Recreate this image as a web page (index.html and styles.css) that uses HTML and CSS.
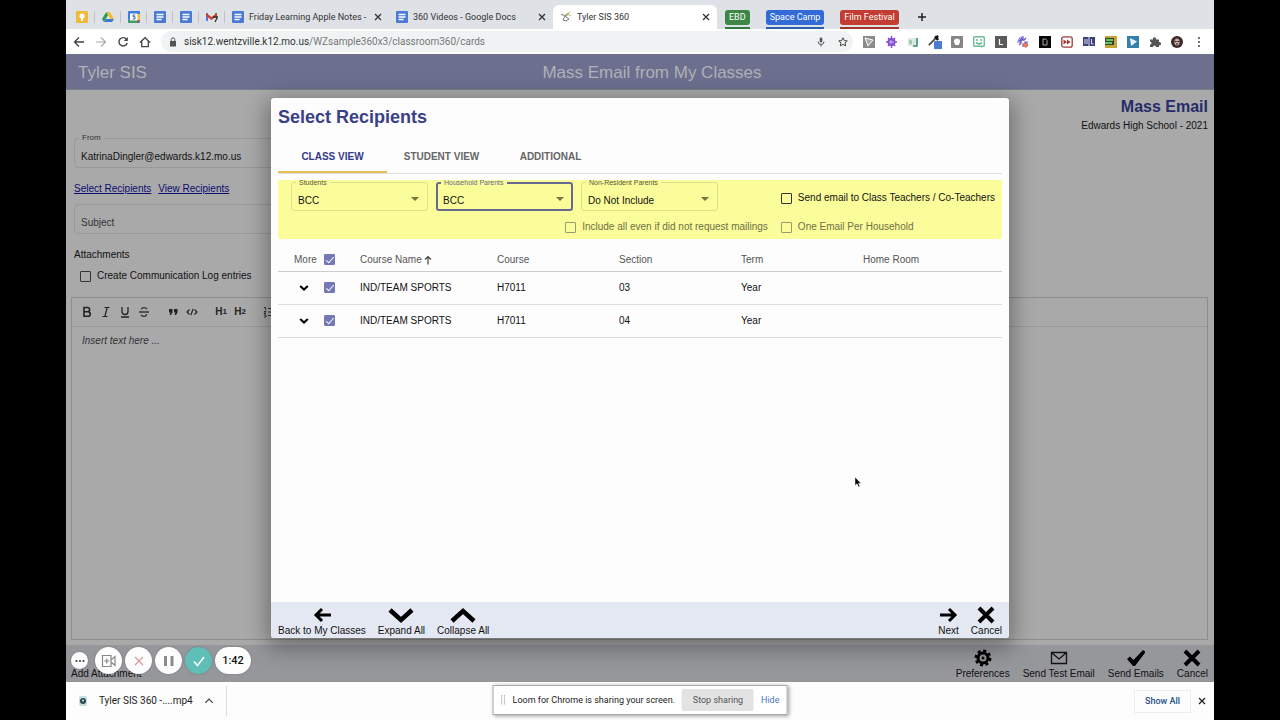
FILE: index.html
```html
<!DOCTYPE html>
<html lang="en">
<head>
<meta charset="utf-8">
<title>Tyler SIS 360</title>
<link rel="stylesheet" href="styles.css">
</head>
<body>
<svg class="defs" aria-hidden="true">
  <symbol id="doc" viewBox="0 0 12 12"><rect width="12" height="12" rx="1" fill="#4a7ad6"/><path d="M2.5 3.5h7M2.5 6h7M2.5 8.5h5" stroke="#fff" stroke-width="1.3"/></symbol>
  <symbol id="close" viewBox="0 0 8 8"><path d="M1 1l6 6M7 1L1 7" stroke="currentColor" stroke-width="1.3"/></symbol>
  <symbol id="cross" viewBox="0 0 18 18"><path d="M2 2l14 14M16 2L2 16" stroke="#000" stroke-width="4"/></symbol>
  <symbol id="chev" viewBox="0 0 10 6"><path d="M1.2 1L5 4.6 8.8 1" fill="none" stroke="#000" stroke-width="2"/></symbol>
</svg>
<div class="screen">
  <nav class="tabs" aria-label="Browser tabs">
    <span class="pin"><svg viewBox="0 0 12 12"><rect width="12" height="12" rx="1" fill="#efb93a"/><circle cx="6" cy="5" r="2.6" fill="#fff"/><path d="M5 7h2v3H5z" fill="#fff"/></svg></span>
    <span class="pin"><svg viewBox="0 0 12 12"><path d="M4.2 1h3.6L12 8H8.300z" fill="#f2bd2c"/><path d="M4.200 1L6 4.200 2 11 0 8z" fill="#2d9c57"/><path d="M3.800 8H12l-2 3H2z" fill="#3f76d8"/></svg></span>
    <span class="pin"><svg viewBox="0 0 12 12"><rect width="12" height="12" rx="1" fill="#3e7de0"/><path d="M9 9h3l-3 3z" fill="#d94b3d"/><path d="M0 9h9v3H1z" fill="#39a257"/><path d="M9 3h3v6H9z" fill="#efbd36"/><path d="M2 2.500h7.500v7H2z" fill="#fff"/><path d="M7.200 4H5v1.700h2V8H4.500" fill="none" stroke="#3465ac"/></svg></span>
    <span class="pin"><svg><use href="#doc"/></svg></span>
    <span class="pin"><svg><use href="#doc"/></svg></span>
    <span class="pin"><svg viewBox="0 0 12 12"><path d="M0 2h2v8H0z" fill="#4a7fd8"/><path d="M9 2h2v4H9z" fill="#37a457"/><path d="M0 2l5.500 4L11 2v3L5.500 9 0 5z" fill="#cf3c32"/><path d="M7 6h4.500L9 11" fill="none" stroke="#333" stroke-width="1.300"/></svg></span>
    <span class="tab"><svg class="fav"><use href="#doc"/></svg><span class="name">Friday Learning Apple Notes -</span><button aria-label="Close tab"><svg><use href="#close"/></svg></button></span>
    <span class="tab"><svg class="fav"><use href="#doc"/></svg><span class="name">360 Videos - Google Docs</span><button aria-label="Close tab"><svg><use href="#close"/></svg></button></span>
    <span class="tab active"><svg class="fav" viewBox="0 0 12 12"><path d="M1 3l4 2M5 5l4-2M5 5l-2 4M5 5l4 3" stroke="#777" stroke-width="1"/><path d="M5 4l5-3M9 5l2-1" stroke="#c6b64a" stroke-width="1"/><path d="M3 9l3 1 3-2" fill="none" stroke="#777"/></svg><span class="name">Tyler SIS 360</span><button aria-label="Close tab"><svg><use href="#close"/></svg></button></span>
    <span class="group green"><span>EBD</span></span>
    <span class="group blue"><span>Space Camp</span></span>
    <span class="group red"><span>Film Festival</span></span>
    <button class="plus" aria-label="New tab"><svg viewBox="0 0 10 10"><path d="M5 1v8M1 5h8" stroke="#222" stroke-width="1.500"/></svg></button>
  </nav>

  <div class="toolbar">
    <button aria-label="Back"><svg viewBox="0 0 12 12"><path d="M11 6H2M6 1.500L1.500 6 6 10.500" fill="none" stroke="#444" stroke-width="1.300"/></svg></button>
    <button aria-label="Forward"><svg viewBox="0 0 12 12"><path d="M1 6h9M6 1.500L10.500 6 6 10.500" fill="none" stroke="#aaa" stroke-width="1.200"/></svg></button>
    <button aria-label="Reload"><svg viewBox="0 0 12 12"><path d="M9.500 3.200A4.200 4.200 0 1 0 10.200 7" fill="none" stroke="#444" stroke-width="1.400"/><path d="M10.800 1v4H6.800z" fill="#444"/></svg></button>
    <button aria-label="Home"><svg viewBox="0 0 12 12"><path d="M1 6.500L6 1.700l5 4.800M2.700 5.500v5.200h6.600V5.500" fill="none" stroke="#444" stroke-width="1.300"/></svg></button>
    <div class="omni">
      <svg viewBox="0 0 10 10"><path d="M2 4h6v5.500H2z" fill="#555"/><path d="M3.300 4V2.500a1.700 1.700 0 0 1 3.400 0V4" fill="none" stroke="#555"/></svg>
      <span class="url">sisk12.wentzville.k12.mo.us<span>/WZsample360x3/classroom360/cards</span></span>
      <svg viewBox="0 0 10 10"><rect x="3.700" y=".5" width="2.600" height="5" rx="1.300" fill="#555"/><path d="M2 4.500a3 3 0 0 0 6 0M5 7.500v2" fill="none" stroke="#555"/></svg>
      <svg viewBox="0 0 10 10"><path d="M5 .8l1.300 2.800 3 .3L7 5.900l.7 3L5 7.400 2.300 8.900l.7-3L.7 3.900l3-.3z" fill="none" stroke="#444"/></svg>
    </div>
    <div class="exts">
      <svg viewBox="0 0 12 12"><rect width="12" height="12" fill="#8b8b8b"/><path d="M2 2l8 2-5 6z" fill="#aaa" stroke="#fff"/></svg>
      <svg viewBox="0 0 12 12"><circle cx="6.500" cy="6" r="4" fill="#8450cf"/><path d="M6.500 0v12M1 6h11M3 2l7 8M10 2l-7 8" stroke="#8450cf" stroke-width="1.500"/><path d="M4 6h5M6 4v4" stroke="#cdb4f0"/></svg>
      <svg viewBox="0 0 12 12"><path d="M1 2h10v8H1z" fill="#dce7e2"/><path d="M10 2v8H6" fill="none" stroke="#35916c" stroke-width="1.500"/><path d="M2 4h3v4H2z" fill="#9fc8b7"/></svg>
      <svg class="pipette" viewBox="0 0 14 14"><path d="M1 10l7-7" stroke="#444" stroke-width="1.600"/><path d="M7 1.500L10 5M8 3l2-2" stroke="#111" stroke-width="2.400"/><rect x="6" y="6" width="8" height="8" rx="1" fill="#4a7cd6"/></svg>
      <svg viewBox="0 0 12 12"><rect width="12" height="12" rx="1" fill="#858585"/><circle cx="6" cy="5.500" r="3" fill="#fff"/><path d="M4 8h4v1H4z" fill="#fff"/></svg>
      <svg viewBox="0 0 12 12"><rect x=".7" y=".7" width="10.600" height="9.600" rx="1" fill="#fff" stroke="#6cbd98" stroke-width="1.400"/><path d="M3 6.500q3 3 6 0M4 3v2M8 3v2" fill="none" stroke="#58ae85" stroke-width="1.300"/><path d="M7 10h3l-1 2z" fill="#6cbd98"/></svg>
      <svg viewBox="0 0 12 12"><rect width="12" height="12" fill="#5b5b5b"/><path d="M4.500 3v5.500H8" fill="none" stroke="#fff" stroke-width="1.200"/></svg>
      <svg viewBox="0 0 12 12"><path d="M6 0v11M0 6h11M2 2l8 8M9 2L2 9M4 .7l4 10M1 4l10 4" stroke="#6258c8" stroke-width="1.200"/><circle cx="6" cy="6" r="1.500" fill="#fff"/><path d="M6 7h5v3l-2 2-3-2z" fill="#e27562"/></svg>
      <svg viewBox="0 0 12 12"><rect width="12" height="12" fill="#080808"/><path d="M4 3h2.500L8 4.500V9H4z" fill="none" stroke="#aaa"/></svg>
      <svg viewBox="0 0 12 12"><rect x=".8" y=".8" width="10.400" height="10.400" rx="2" fill="#fff" stroke="#9d3a3a" stroke-width="1.300"/><path d="M2.500 3.500L6 6 2.500 8.500zM6 3.500L9.500 6 6 8.500z" fill="#b03030"/></svg>
      <svg viewBox="0 0 12 12"><path d="M0 1h12v9H0z" fill="#3d4079"/><path d="M2 3v5M4 3v5M6 1v9M8.500 3v5h2" stroke="#dadaf0" fill="none"/></svg>
      <svg viewBox="0 0 12 12"><path d="M0 0h12v12H0z" fill="#c6a338"/><path d="M0 2h9v7H0z" fill="#2e4630"/><path d="M1 4h7M0 7h7" stroke="#8be57b" stroke-width="1.500"/></svg>
      <svg viewBox="0 0 12 12"><path d="M0 0h12v12H0z" fill="#347fae"/><path d="M3 2l7 3.500L4 10z" fill="#eaf6ff"/></svg>
      <svg viewBox="0 0 12 12"><path d="M1 3.500h3a1.600 1.600 0 1 1 3 0h3v2.700a1.600 1.600 0 1 1 0 3V11H7a1.500 1.500 0 0 0-3 0H1V8.500a1.500 1.500 0 0 0 0-3z" fill="#555"/></svg>
      <svg viewBox="0 0 12 12"><circle cx="6" cy="6" r="6" fill="#3a2a2a"/><ellipse cx="6" cy="6" rx="2.700" ry="3.500" fill="#c4a79b"/><path d="M3.500 5.500h2M6.500 5.500h2M5 8h2" stroke="#3a2424"/></svg>
      <svg viewBox="0 0 12 12"><g fill="#444"><circle cx="6" cy="2" r="1"/><circle cx="6" cy="6" r="1"/><circle cx="6" cy="10" r="1"/></g></svg>
    </div>
  </div>

  <main class="page">
    <header class="apphead"><span>Tyler SIS</span><h1>Mass Email from My Classes</h1><span></span></header>
    <section class="compose">
      <div class="heading"><h2>Mass Email</h2><p>Edwards High School - 2021</p></div>
      <div class="form">
        <div class="box from"><label for="from">From</label><input id="from" type="text" value="KatrinaDingler@edwards.k12.mo.us"></div>
        <div class="links"><a href="#select">Select Recipients</a><a href="#view">View Recipients</a></div>
        <div class="box"><input type="text" aria-label="Subject" placeholder="Subject"></div>
        <p class="attach">Attachments</p>
        <label class="check log"><input type="checkbox">Create Communication Log entries</label>
      </div>
      <div class="editor">
        <div class="format">
          <button aria-label="Bold"><svg viewBox="0 0 12 12"><path d="M3 1.500h3.500a2 2 0 0 1 0 4.200H3zM3 5.700h4a2.200 2.200 0 0 1 0 4.600H3z" fill="none" stroke="#222" stroke-width="1.600"/></svg></button>
          <button aria-label="Italic"><svg viewBox="0 0 12 12"><path d="M4.500 1.500h5M2.500 10.500h5M7.200 1.500l-2.400 9" stroke="#222" stroke-width="1.200"/></svg></button>
          <button aria-label="Underline"><svg viewBox="0 0 12 12"><path d="M3 1v4.500a3 3 0 0 0 6 0V1M2 11h8" fill="none" stroke="#222" stroke-width="1.300"/></svg></button>
          <button aria-label="Strike"><svg viewBox="0 0 12 12"><path d="M9 3.200C8 1 3.500 1 3.500 3.500M8.500 8C8.500 11 4 10.800 3 8.800M1 6h10" fill="none" stroke="#333" stroke-width="1.300"/></svg></button>
          <button class="gap" aria-label="Quote"><svg viewBox="0 0 12 12"><path d="M2 3h3.500v3.500L4 9H2.500l1-2.500H2zM7 3h3.500v3.500L9 9H7.500l1-2.500H7z" fill="#222"/></svg></button>
          <button aria-label="Code"><svg viewBox="0 0 12 12"><path d="M3.500 3.500L1 6l2.500 2.500M8.500 3.500L11 6 8.500 8.500M7 3L5 9" fill="none" stroke="#222" stroke-width="1.200"/></svg></button>
          <button class="gap">H<sub>1</sub></button>
          <button>H<sub>2</sub></button>
          <button class="gap list" aria-label="List"><svg viewBox="0 0 12 12"><path d="M5 2.500h6M5 6h6M5 9.500h6M1 1.500h1.500V4M1 5.500h2L1 7.500h2M1 9h2v2H1" fill="none" stroke="#333"/></svg></button>
        </div>
        <p class="hint">Insert text here ...</p>
      </div>
    </section>
    <footer class="actions">
      <button class="act"><svg></svg>Add Attachment</button>
      <span class="spring"></span>
      <button class="act"><svg viewBox="0 0 18 18"><circle cx="9" cy="9" r="5" fill="none" stroke="#000" stroke-width="3"/><circle cx="9" cy="9" r="7.200" fill="none" stroke="#000" stroke-width="2.500" stroke-dasharray="3 2.650"/><circle cx="9" cy="9" r="1.500"/></svg>Preferences</button>
      <button class="act"><svg viewBox="0 0 18 18"><path d="M1.500 3.500h15v11h-15zM2 4l7 6 7-6" fill="none" stroke="#111" stroke-width="1.300"/></svg>Send Test Email</button>
      <button class="act"><svg viewBox="0 0 18 18"><path d="M0 10l3-2.500 3.500 3.500L16 1l2.500 2L8 17H6z"/></svg>Send Emails</button>
      <button class="act"><svg><use href="#cross"/></svg>Cancel</button>
    </footer>

    <div class="overlay">
      <section class="dialog" role="dialog" aria-label="Select Recipients">
        <div class="body">
          <h2>Select Recipients</h2>
          <div class="views"><button class="on">CLASS VIEW</button><button>STUDENT VIEW</button><button>ADDITIONAL</button></div>
          <div class="options">
            <div class="fields">
              <div class="pick"><label for="st">Students</label><select id="st"><option>BCC</option></select></div>
              <div class="pick focus"><label for="hp">Household Parents</label><select id="hp"><option>BCC</option></select></div>
              <div class="pick"><label for="nr">Non-Resident Parents</label><select id="nr"><option>Do Not Include</option></select></div>
            </div>
            <label class="check"><input type="checkbox">Send email to Class Teachers / Co-Teachers</label>
            <label class="check off end"><input type="checkbox" disabled>Include all even if did not request mailings</label>
            <label class="check off"><input type="checkbox" disabled>One Email Per Household</label>
          </div>
          <table>
            <colgroup><col class="c-more"><col class="c-check"><col class="c-name"><col class="c-mid"><col class="c-mid"><col class="c-mid"><col></colgroup>
            <thead><tr><th>More</th><th><input type="checkbox" aria-label="Select all" checked></th><th>Course Name <svg class="sort" viewBox="0 0 8 10"><path d="M4 9.500V1.500M1 4.500l3-3 3 3" fill="none" stroke="#444" stroke-width="1.200"/></svg></th><th>Course</th><th>Section</th><th>Term</th><th>Home Room</th></tr></thead>
            <tbody>
              <tr><td><button class="more" aria-label="More"><svg><use href="#chev"/></svg></button></td><td><input type="checkbox" aria-label="Section 03" checked></td><td>IND/TEAM SPORTS</td><td>H7011</td><td>03</td><td>Year</td><td></td></tr>
              <tr><td><button class="more" aria-label="More"><svg><use href="#chev"/></svg></button></td><td><input type="checkbox" aria-label="Section 04" checked></td><td>IND/TEAM SPORTS</td><td>H7011</td><td>04</td><td>Year</td><td></td></tr>
            </tbody>
          </table>
        </div>
        <footer>
          <button class="act"><svg viewBox="0 0 18 18"><path d="M18 9H3M9 3L3 9l6 6" fill="none" stroke="#000" stroke-width="3"/></svg>Back to My Classes</button>
          <button class="act"><svg class="wide" viewBox="0 0 26 18"><path d="M2 4l11 10L24 4" fill="none" stroke="#000" stroke-width="4.500"/></svg>Expand All</button>
          <button class="act"><svg class="wide" viewBox="0 0 26 18"><path d="M2 15L13 5l11 10" fill="none" stroke="#000" stroke-width="4.500"/></svg>Collapse All</button>
          <span class="spring"></span>
          <button class="act"><svg viewBox="0 0 18 18"><path d="M0 9h15M9 3l6 6-6 6" fill="none" stroke="#000" stroke-width="3"/></svg>Next</button>
          <button class="act"><svg><use href="#cross"/></svg>Cancel</button>
        </footer>
      </section>
    </div>
    <svg class="cursor" viewBox="0 0 8 12"><path d="M1 1v8.500l2-1.700L4.500 11l1.300-.6L4.500 7.500H7z" stroke="#fff" stroke-width=".5"/></svg>

    <div class="loom">
      <button class="dots" aria-label="More controls"><svg viewBox="0 0 10 4"><g fill="#333"><circle cx="1.500" cy="2" r="1"/><circle cx="5" cy="2" r="1"/><circle cx="8.500" cy="2" r="1"/></g></svg></button>
      <button aria-label="Camera"><svg viewBox="0 0 16 16"><path d="M1.500 2.500h8.500v11H1.500zM10 7l4-3.500v9L10 9M5.700 5.500v5M3.200 8h5" fill="none" stroke="#888" stroke-width="1.200"/></svg></button>
      <button aria-label="Discard"><svg viewBox="0 0 16 16"><path d="M4 4l8 8M12 4l-8 8" stroke="#d99a9a" stroke-width="1.300"/></svg></button>
      <button aria-label="Pause"><svg viewBox="0 0 16 16"><path d="M4.500 3v10M11 3v10" stroke="#8b8b8b" stroke-width="3"/></svg></button>
      <button class="done" aria-label="Finish"><svg viewBox="0 0 16 16"><path d="M3 8.500l3.500 4L13 4" fill="none" stroke="#fff" stroke-width="1.500"/></svg></button>
      <span class="time">1:42</span>
    </div>
  </main>

  <div class="downloads">
    <div class="item"><svg viewBox="0 0 10 10"><rect x="1" width="8" height="10" rx="2" fill="#c9dde3"/><circle cx="5" cy="5" r="3" fill="#2c4c58"/><circle cx="5" cy="4.500" r="1" fill="#dbe8ec"/></svg><span>Tyler SIS 360 -....mp4</span><button aria-label="Item menu"><svg viewBox="0 0 8 8"><path d="M1 5.500l3-3 3 3" fill="none" stroke="#444"/></svg></button></div>
    <div class="right"><button class="all">Show All</button><button aria-label="Close"><svg><use href="#close"/></svg></button></div>
    <div class="share"><svg viewBox="0 0 5 10"><path d="M1 0v10M4 0v10" stroke="#bbb" stroke-width="1.300" stroke-dasharray="1.500 .5"/></svg><span>Loom for Chrome is sharing your screen.</span><button class="stop">Stop sharing</button><a href="#hide">Hide</a></div>
  </div>
</div>
</body>
</html>
```

FILE: styles.css
```css
* { box-sizing: border-box; }
body { margin: 0; background: #000; color: #111; font: 10px/12px "Liberation Sans", Arial, sans-serif; }
h1, h2, p { margin: 0; font-weight: normal; }
button { margin: 0; padding: 0; border: 0; background: none; color: inherit; font: inherit; display: flex; align-items: center; justify-content: center; }
svg { display: block; flex: none; }
.defs { position: absolute; width: 0; height: 0; }
.screen { height: 100vh; margin: 0 66px; display: flex; flex-direction: column; background: #fdfdfd; overflow: hidden; }
.spring { flex: 1; }

.tabs { flex: none; height: 29px; padding: 5px 0 0 3px; display: flex; background: #dee1e5; font: 9px/12px Roboto, sans-serif; color: #333; }
.pin { width: 26px; display: flex; align-items: center; justify-content: center; position: relative; }
.pin svg, .fav { width: 12px; height: 12px; }
.pin::after { content: ""; position: absolute; right: 0; top: 6px; height: 12px; border-right: 1px solid #c0c3c8; }
.tab { width: 164px; padding: 0 7px; display: flex; align-items: center; gap: 5px; }
.tab .name { flex: 1; white-space: nowrap; }
.tab button svg { width: 8px; height: 8px; }
.tab.active { background: #fff; border-radius: 6px 6px 0 0; }
.group { margin-left: 8px; padding-top: 5px; margin-right: 8px; border-bottom: 2px solid; }
.group span { display: block; padding: 1px 4px 2px; border-radius: 3px; color: #fff; }
.green { border-color: #337a3c; } .green span { background: #3d8746; }
.blue { border-color: #2d5eb0; } .blue span { background: #326bd8; }
.red { border-color: #a5352c; } .red span { background: #c23c31; }
.plus { margin-left: 10px; }
.plus svg { width: 10px; height: 10px; }

.toolbar { flex: none; height: 25px; padding: 0 9px 0 7px; display: flex; align-items: center; gap: 10px; background: #fff; }
.toolbar button svg { width: 12px; height: 12px; }
.omni { flex: 1; height: 21px; padding: 0 5px 0 7px; display: flex; align-items: center; gap: 6px; border-radius: 11px; background: #f0f3f3; font: 10px/12px Roboto, sans-serif; }
.omni svg { width: 10px; height: 10px; }
.omni svg:last-child { margin-left: 6px; }
.url { flex: 1; color: #333; }
.url span { color: #777; }
.exts { display: flex; gap: 10px; }
.exts svg { width: 12px; height: 12px; }
.exts .pipette { transform: scale(1.2); }

.page { position: relative; flex: 1; min-height: 0; display: flex; flex-direction: column; background: #a9a9a9; }
.apphead { height: 36px; flex: none; padding: 2px 12px 0; display: grid; grid-template-columns: 1fr auto 1fr; align-items: center; background: #6c6f8e; color: #b0b1b8; font-size: 17px; line-height: 20px; border-bottom: 1px solid #777a8a; }
.apphead h1 { padding-left: 24px; font-size: 17px; }
.compose { flex: 1; min-height: 0; padding: 7px 6px 5px 5px; display: flex; flex-direction: column; }
.heading { text-align: right; }
.heading h2 { font-size: 16px; line-height: 20px; font-weight: bold; color: #262c69; }
.heading p { line-height: 18px; }
.form { width: 50%; padding: 0 3px; }
.box { position: relative; height: 30px; border: 1px solid #999; border-radius: 4px; }
.from { margin-top: 3px; }
.box label { position: absolute; left: 4px; top: -6px; padding: 0 3px; background: #a9a9a9; font-size: 8px; line-height: 10px; color: #333; }
.box input { width: 100%; height: 100%; padding: 6px 6px 0; border: 0; background: none; font: 10px/14px "Liberation Sans", Arial, sans-serif; color: #111; }
.box input::placeholder { color: #333; opacity: 1; }
.links { padding: 14px 0 9px; display: flex; gap: 7px; line-height: 13px; }
.links a { color: #0c0c70; }
.attach { padding-top: 14px; line-height: 13px; }
.check { display: flex; align-items: center; gap: 6px; line-height: 12px; white-space: nowrap; }
.log { padding: 9px 0 15px 6px; }
input[type=checkbox] { appearance: none; position: relative; flex: none; width: 11px; height: 11px; margin: 0; border: 1px solid #333; border-radius: 1px; }
input[type=checkbox]:checked { border-color: #7478b4; background: #7478b4; }
input[type=checkbox]:checked::after { content: ""; position: absolute; left: 3px; top: 0; width: 3px; height: 7px; border: solid #fff; border-width: 0 1px 1px 0; transform: rotate(42deg); }
.editor { flex: 1; border: 1px solid #8d8d8d; }
.format { height: 29px; padding-left: 9px; display: flex; align-items: center; gap: 7px; border-bottom: 1px solid #999; font-size: 10px; font-weight: bold; color: #222; }
.format button { width: 12px; height: 14px; }
.format svg { width: 12px; height: 12px; }
.format .gap { margin-left: 10px; }
.format sub { font-size: 8px; line-height: 8px; align-self: center; }
.hint { padding: 8px 10px; font-style: italic; color: #333; }
.actions { flex: none; height: 37px; padding: 2px 6px 0 5px; display: flex; align-items: center; gap: 13px; background: #96979b; }
.act { flex-direction: column; gap: 1px; white-space: nowrap; font-size: 10px; line-height: 12px; color: #111; }
.act svg { width: 18px; height: 18px; }
.act .wide { width: 26px; }

.overlay { position: absolute; inset: 0; display: flex; align-items: center; justify-content: center; }
.dialog { width: calc(100% - 410px); height: calc(100% - 88px); display: flex; flex-direction: column; border-radius: 3px; overflow: hidden; background: #fdfdfd; box-shadow: 0 6px 22px 4px rgba(0, 0, 0, .35); }
.body { flex: 1; min-height: 0; padding: 8px 7px; }
.body h2 { font-size: 18px; line-height: 22px; font-weight: bold; color: #3a4087; }
.views { margin-top: 12px; display: flex; border-bottom: 1px solid #ddd; }
.views button { width: 109px; height: 33px; padding-top: 3px; border-bottom: 2px solid transparent; font-size: 10px; font-weight: bold; color: #666; }
.views .on { color: #343b8c; border-color: #e7bf55; }
.options { margin-top: 6px; height: 59px; padding: 0 7px 0 13px; display: grid; grid-template-columns: 1fr auto; grid-template-rows: 36px 23px; column-gap: 13px; align-items: center; background: #fbfd9b; overflow: hidden; }
.options .off { align-self: start; padding-top: 5px; color: #6e7046; }
.options .off input { border-color: #999b70; }
.end { justify-self: end; }
.fields { display: flex; gap: 8px; align-self: start; padding-top: 2px; }
.pick { position: relative; width: 137px; height: 29px; border: 1px solid #dde08a; border-radius: 3px; }
.pick label { position: absolute; z-index: 1; left: 4px; top: -4px; padding: 0 3px; background: #fbfd9b; font-size: 7px; line-height: 8px; color: #55573a; white-space: nowrap; }
.pick select { appearance: none; width: 100%; height: 100%; padding: 8px 6px 0; border: 0; background: none; font: 10px/14px "Liberation Sans", Arial, sans-serif; color: #111; }
.pick::after { content: ""; position: absolute; right: 8px; top: 14px; border: 4px solid transparent; border-top-color: #73753c; border-bottom: 0; }
.pick.focus { border: 2px solid #666a90; }
.pick.focus label { left: 3px; top: -5px; color: #66688a; }
.pick.focus select { padding: 8px 5px 0; }
.pick.focus::after { right: 7px; top: 13px; }
table { width: 100%; table-layout: fixed; border-collapse: collapse; }
.c-more { width: 46px; } .c-check { width: 36px; } .c-name { width: 137px; } .c-mid { width: 122px; }
th { height: 32px; padding: 10px 0 0; text-align: left; font-weight: normal; color: #555; border-bottom: 1px solid #ccc; vertical-align: middle; }
th input { vertical-align: top; }
td { height: 33px; padding: 0; border-bottom: 1px solid #ddd; vertical-align: middle; }
td input { display: block; }
th:first-child { padding-left: 16px; }
.sort { display: inline-block; width: 8px; height: 10px; vertical-align: -2px; }
.more { margin-left: 21px; }
.more svg { width: 10px; height: 6px; }
.dialog footer { height: 36px; flex: none; padding: 2px 7px 0; display: flex; align-items: center; gap: 12px; background: #e4e8f2; }
.cursor { position: absolute; left: 788px; top: 422px; width: 8px; height: 12px; }

.loom { position: absolute; left: 5px; bottom: 8px; display: flex; align-items: center; gap: 3px; }
.loom button, .time { width: 27px; height: 27px; border-radius: 14px; background: #fdfdfd; box-shadow: 0 0 2px rgba(0, 0, 0, .25); }
.loom svg { width: 16px; height: 16px; }
.loom .dots { width: 17px; height: 17px; margin-right: 4px; }
.loom .dots svg { width: 10px; height: 4px; }
.loom .done { background: #5fbfb8; }
.loom .time { width: 36px; font: 500 11px/27px Roboto, sans-serif; text-align: center; }

.downloads { position: relative; flex: none; height: 38px; display: flex; align-items: center; justify-content: space-between; background: #fdfdfd; font: 10px/12px Roboto, sans-serif; color: #222; }
.item { width: 161px; height: 30px; padding: 0 12px; display: flex; align-items: center; gap: 11px; border-right: 1px solid #ddd; white-space: nowrap; }
.item span { flex: 1; }
.item svg { width: 10px; height: 10px; }
.right { display: flex; align-items: center; padding-right: 8px; gap: 7px; }
.right svg { width: 8px; height: 8px; }
.all { width: 57px; height: 23px; border: 1px solid #eee; color: #24508a; font-size: 9px; font-weight: 500; white-space: nowrap; }
.share { position: absolute; left: 50%; top: 3px; transform: translateX(-50%); height: 30px; padding: 0 7px; display: flex; align-items: center; gap: 7px; background: #fff; border: 1px solid #aaa; box-shadow: 1px 1px 4px rgba(0, 0, 0, .4); font-size: 9px; white-space: nowrap; }
.share svg { width: 5px; height: 10px; }
.stop { width: 72px; height: 22px; border-radius: 2px; background: #e3e3e3; color: #555; }
.share a { color: #4a76bd; text-decoration: none; }
```
